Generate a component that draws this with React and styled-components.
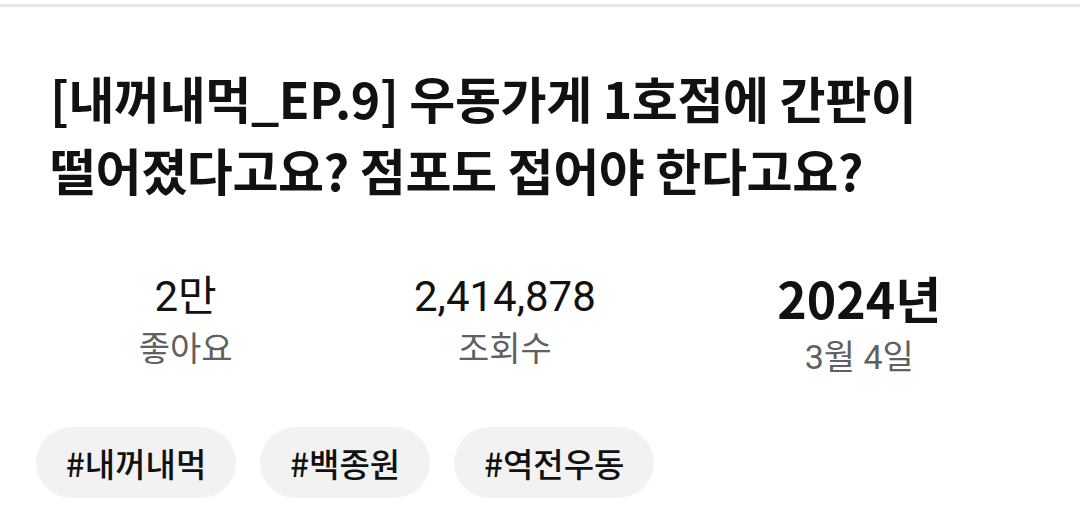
import styled, { createGlobalStyle } from "styled-components";

const GlobalStyle = createGlobalStyle`
  html, body {
    margin: 0;
    padding: 0;
    background: #fff;
  }
  body {
    font-family: "Noto Sans CJK KR", "Noto Sans", sans-serif;
    color: #111;
  }
`;

const stats = [
  { value: "2만", label: "좋아요" },
  { value: "2,414,878", label: "조회수" },
  { value: "2024년", label: "3월 4일", big: true },
];

const tags = ["#내꺼내먹", "#백종원", "#역전우동"];

export default function App() {
  return (
    <>
      <GlobalStyle />
      <Page>
        <Divider />
        <Title>
          [내꺼내먹_EP.9] 우동가게 1호점에 간판이
          <br />
          떨어졌다고요? 점포도 접어야 한다고요?
        </Title>
        <StatRow>
          {stats.map((s) => (
            <Stat key={s.label}>
              <StatValue big={s.big}>{s.value}</StatValue>
              <StatLabel big={s.big}>{s.label}</StatLabel>
            </Stat>
          ))}
        </StatRow>
        <TagRow>
          {tags.map((t) => (
            <Tag key={t}>{t}</Tag>
          ))}
        </TagRow>
      </Page>
    </>
  );
}

const Page = styled.div`
  width: 1080px;
  height: 511px;
  overflow: hidden;
  padding-top: 4px;
  box-sizing: border-box;
`;

const Divider = styled.div`
  height: 3px;
  background: #e6e6e6;
`;

const Title = styled.h1`
  margin: 54px 0 0 50px;
  font-size: 50px;
  font-weight: 700;
  line-height: 72px;
  color: #111;
  letter-spacing: -0.4px;
  white-space: nowrap;
`;

const StatRow = styled.div`
  display: flex;
  justify-content: space-around;
  align-items: flex-start;
  padding: 0 48px;
  margin-top: 66px;
`;

const Stat = styled.div`
  display: flex;
  flex-direction: column;
  align-items: center;
`;

const StatValue = styled.div`
  font-family: ${({ big }) =>
    big ? `"Noto Sans CJK KR", sans-serif` : `Roboto, "Noto Sans CJK KR", sans-serif`};
  font-size: ${({ big }) => (big ? "50px" : "42px")};
  font-weight: ${({ big }) => (big ? 700 : 400)};
  line-height: 52px;
  color: #111;
`;

const StatLabel = styled.div`
  margin-top: ${({ big }) => (big ? "8px" : "0")};
  font-family: Roboto, "Noto Sans CJK KR", sans-serif;
  font-size: 34px;
  line-height: 52px;
  color: #606060;
`;

const TagRow = styled.div`
  display: flex;
  gap: 24px;
  padding-left: 36px;
  margin-top: 44px;
`;

const Tag = styled.div`
  height: 71px;
  padding: 0 30px;
  border-radius: 36px;
  background: #f2f2f2;
  display: flex;
  align-items: center;
  font-size: 33px;
  font-weight: 500;
  color: #111;
`;
